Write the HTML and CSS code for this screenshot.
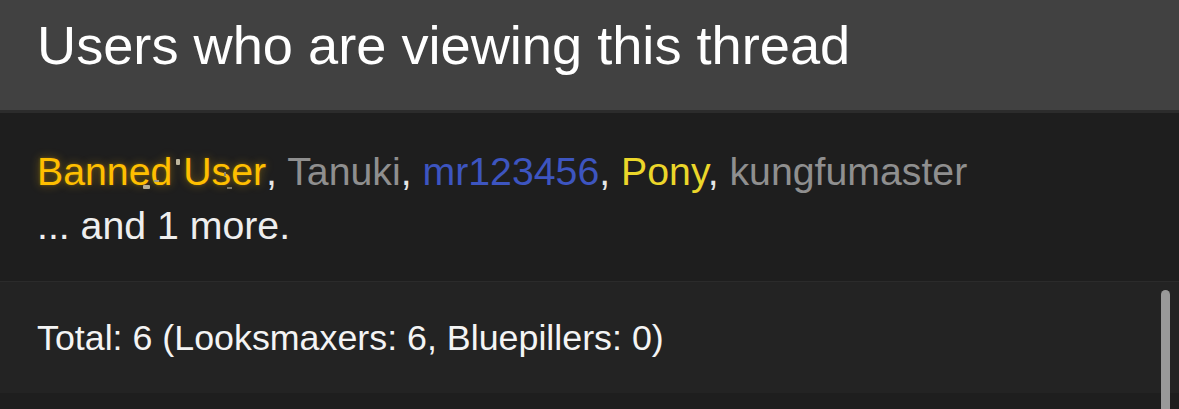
FILE: index.html
```html
<!DOCTYPE html>
<html lang="en">
<head>
  <meta charset="UTF-8" />
  <meta name="viewport" content="width=device-width, initial-scale=1.0" />
  <title>Users who are viewing this thread</title>
  <link rel="stylesheet" href="styles.css">
</head>
<body>
  <section class="block">
    <header class="block-header">
      <h3>Users who are viewing this thread</h3>
    </header>
    <div class="block-body">
      <div class="user-list">
        <a class="username banned">Banned User</a>, <a class="username member">Tanuki</a>, <a class="username blue">mr123456</a>, <a class="username gold">Pony</a>, <a class="username member">kungfumaster</a>
      </div>
      <div class="more">... and 1 more.</div>
    </div>
    <footer class="block-footer">
      Total: 6 (Looksmaxers: 6, Bluepillers: 0)
    </footer>
  </section>
  <div class="scrollbar"></div>
</body>
</html>
```

FILE: styles.css
```css
:root {
  --header-bg: #414141;
  --body-bg: #1e1e1e;
  --footer-bg: #232323;
  --text: #eeeeee;
}
* {
  box-sizing: border-box;
}
body {
  margin: 0;
  background: var(--body-bg);
  color: var(--text);
  font-family: "Liberation Sans", Arial, sans-serif;
  overflow: hidden;
}
.block-header {
  background: var(--header-bg);
  height: 113px;
  border-bottom: 3px solid #2c2c2c;
  padding: 15px 37px 0;
}
.block-header h3 {
  margin: 0;
  font-weight: 400;
  font-size: 54.2px;
  line-height: 60px;
  color: #ffffff;
}
.block-body {
  height: 168px;
  padding: 31px 37px 0;
  font-size: 39.25px;
  line-height: 54px;
}
.user-list {
  color: #e6e6e6;
  white-space: nowrap;
}
.username {
  text-decoration: none;
}
.username.banned {
  position: relative;
  color: #ffbf00;
  text-shadow: 0 0 10px rgba(255, 190, 0, 0.4), 0 0 3px rgba(255, 190, 0, 0.25);
}
/* little sparkles on the banned name */
.username.banned::before,
.username.banned::after {
  content: "";
  position: absolute;
  border-radius: 1px;
}
.username.banned::before {
  left: 139px;
  top: 10px;
  width: 4px;
  height: 6px;
  background: #bdb69c;
  box-shadow: 47px 12px 0 -1px #8a8573;
}
.username.banned::after {
  left: 106px;
  top: 36px;
  width: 7px;
  height: 4px;
  background: #b5ae98;
  box-shadow: 10px -6px 0 -1px #a49e88, 83px 1px 0 -1px #7c786b;
}
.username.member {
  color: #8f8f8f;
}
.username.blue {
  color: #3d55c0;
}
.username.gold {
  color: #ebd62a;
}
.more {
  color: #eeeeee;
}
.block-footer {
  background: var(--footer-bg);
  height: 112px;
  border-top: 1px solid #2b2b2b;
  padding: 35px 37px 0;
  font-size: 35.8px;
  line-height: 42px;
  color: #f4f4f4;
}
.scrollbar {
  position: fixed;
  left: 1161px;
  top: 290px;
  width: 9px;
  height: 140px;
  border-radius: 5px;
  background: #999999;
}
```
